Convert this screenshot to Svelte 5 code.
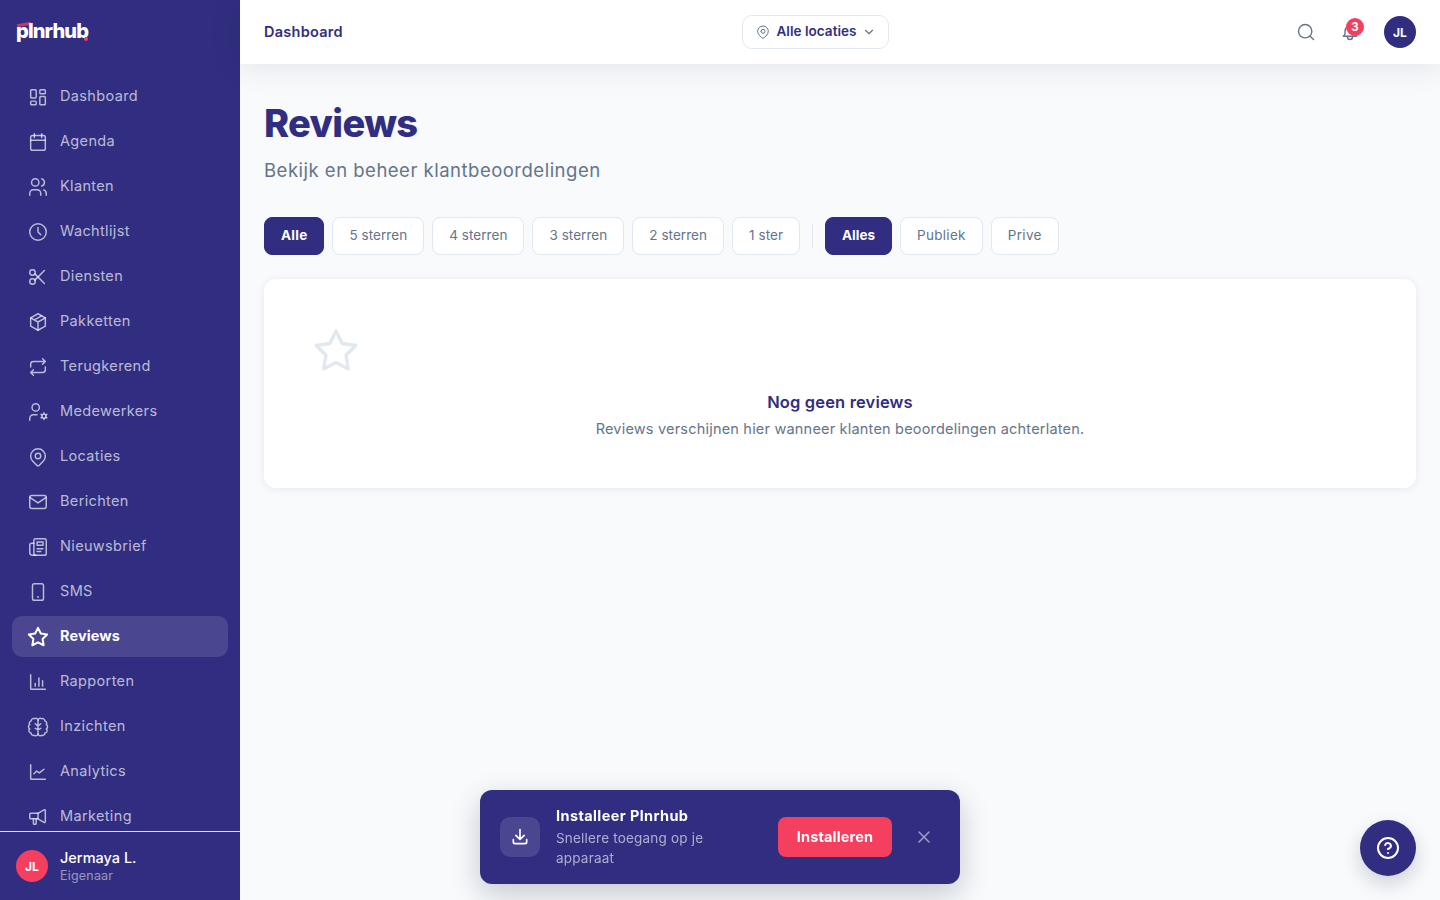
<script lang="ts">
  type NavItem = { label: string; icon: string };

  // stroke icons, 24x24 viewBox
  const icons: Record<string, string> = {
    dashboard: '<rect x="4" y="4" width="6" height="9" rx="1"/><rect x="4" y="16.500" width="6" height="4" rx="1"/><rect x="14" y="4" width="6" height="4.500" rx="1"/><rect x="14" y="11.500" width="6" height="9" rx="1"/>',
    calendar: '<rect x="4" y="5" width="16" height="16" rx="2"/><path d="M16 3v4M8 3v4M4 10h16"/>',
    users: '<path d="M5 7a4 4 0 1 0 8 0a4 4 0 1 0 -8 0"/><path d="M3 21v-2a4 4 0 0 1 4 -4h4a4 4 0 0 1 4 4v2"/><path d="M16 3.130a4 4 0 0 1 0 7.750"/><path d="M21 21v-2a4 4 0 0 0 -3 -3.850"/>',
    clock: '<circle cx="12" cy="12" r="9"/><path d="M12 7v5l3 3"/>',
    scissors: '<path d="M3 7a3 3 0 1 0 6 0a3 3 0 1 0 -6 0"/><path d="M3 17a3 3 0 1 0 6 0a3 3 0 1 0 -6 0"/><path d="M8.600 8.600l10.400 10.400"/><path d="M8.600 15.400l10.400 -10.400"/>',
    box: '<path d="M12 3l8 4.500v9l-8 4.500l-8 -4.500v-9l8 -4.500"/><path d="M12 12l8 -4.500M12 12v9M12 12l-8 -4.500M16 5.250l-8 4.500"/>',
    repeat: '<path d="M4 12v-3a3 3 0 0 1 3 -3h13m-3 -3l3 3l-3 3"/><path d="M20 12v3a3 3 0 0 1 -3 3h-13m3 3l-3 -3l3 -3"/>',
    usercog: '<circle cx="9.500" cy="7" r="4"/><path d="M3 21v-2a4 4 0 0 1 4 -4h4"/><circle cx="18.500" cy="16.500" r="2.200"/><path d="M18.500 12.800v1.200M18.500 19v1.200M15.300 14.600l1 .6M20.700 17.800l1 .6M15.300 18.400l1 -.6M20.700 15.200l1 -.6"/>',
    pin: '<path d="M9 11a3 3 0 1 0 6 0a3 3 0 0 0 -6 0"/><path d="M17.657 16.657l-4.243 4.243a2 2 0 0 1 -2.827 0l-4.244 -4.243a8 8 0 1 1 11.314 0z"/>',
    mail: '<rect x="3" y="5" width="18" height="14" rx="2"/><path d="M3 7l9 6l9 -6"/>',
    news: '<rect x="7.500" y="3" width="13.500" height="18" rx="2"/><path d="M7.500 8H5a2 2 0 0 0 -2 2v8a3 3 0 0 0 3 3h3.500"/><rect x="11" y="6.500" width="6.500" height="3.500"/><path d="M11 14h6.500M11 17h4"/>',
    phone: '<rect x="6" y="3" width="12" height="18" rx="2"/><path d="M11.500 17.500h1"/>',
    star: '<path d="M12 17.750l-6.172 3.245l1.179 -6.873l-5 -4.867l6.900 -1l3.086 -6.253l3.086 6.253l6.900 1l-5 4.867l1.179 6.873z"/>',
    report: '<path d="M4 4v15a1 1 0 0 0 1 1h15"/><path d="M9 16.500v-3M13 16.500v-9M17 16.500v-6"/>',
    brain: '<path d="M12 4.500A2.500 2.500 0 0 0 8 3A2.500 2.500 0 0 0 4.500 5.500A2.500 2.500 0 0 0 3 9.500A2.500 2.500 0 0 0 3 14A2.500 2.500 0 0 0 4.500 18.500A2.500 2.500 0 0 0 8 21A2.500 2.500 0 0 0 12 19.500A2.500 2.500 0 0 0 16 21A2.500 2.500 0 0 0 19.500 18.500A2.500 2.500 0 0 0 21 14A2.500 2.500 0 0 0 21 9.500A2.500 2.500 0 0 0 19.500 5.500A2.500 2.500 0 0 0 16 3A2.500 2.500 0 0 0 12 4.500z"/><path d="M12 4.500v15M12 11l-3 -2.500M12 11l3 -2.500M12 15l-3 -1.500M12 15l3 -1.500"/>',
    chart: '<path d="M4 4v15a1 1 0 0 0 1 1h15"/><path d="M7.500 14l3 -3l3 2l5 -4"/>',
    megaphone: '<path d="M10 14v5a1 1 0 0 1 -1 1h-1a1 1 0 0 1 -1 -1v-5"/><path d="M12 8l6.524 -3.770a.9 .9 0 0 1 1.476 .692v12.156a.9 .9 0 0 1 -1.476 .692l-6.524 -3.770h-8a1 1 0 0 1 -1 -1v-4a1 1 0 0 1 1 -1h8"/><path d="M12 8v6"/>'
  };

  const nav: NavItem[] = [
    { label: 'Dashboard', icon: 'dashboard' },
    { label: 'Agenda', icon: 'calendar' },
    { label: 'Klanten', icon: 'users' },
    { label: 'Wachtlijst', icon: 'clock' },
    { label: 'Diensten', icon: 'scissors' },
    { label: 'Pakketten', icon: 'box' },
    { label: 'Terugkerend', icon: 'repeat' },
    { label: 'Medewerkers', icon: 'usercog' },
    { label: 'Locaties', icon: 'pin' },
    { label: 'Berichten', icon: 'mail' },
    { label: 'Nieuwsbrief', icon: 'news' },
    { label: 'SMS', icon: 'phone' },
    { label: 'Reviews', icon: 'star' },
    { label: 'Rapporten', icon: 'report' },
    { label: 'Inzichten', icon: 'brain' },
    { label: 'Analytics', icon: 'chart' },
    { label: 'Marketing', icon: 'megaphone' }
  ];

  const ratings = ['Alle', '5 sterren', '4 sterren', '3 sterren', '2 sterren', '1 ster'];
  const scopes = ['Alles', 'Publiek', 'Prive'];

  let rating = $state('Alle');
  let scope = $state('Alles');
  let showInstall = $state(true);
</script>

<div class="layout">
  <aside class="sidebar">
    <div class="logo">
      <span class="logo-bar"></span>
      <span class="logo-text">plnrhub</span>
      <span class="logo-dot"></span>
    </div>
    <nav class="nav">
      {#each nav as item}
        <a class="nav-item" class:active={item.label === 'Reviews'} href="#{item.icon}">
          <svg class="nav-icon" viewBox="0 0 24 24" stroke-width={item.label === 'Reviews' ? 2.2 : 1.6}>{@html icons[item.icon]}</svg>
          <span class="nav-label">{item.label}</span>
        </a>
      {/each}
    </nav>
    <div class="user">
      <div class="avatar avatar--red">JL</div>
      <div class="user-info">
        <div class="user-name">Jermaya L.</div>
        <div class="user-role">Eigenaar</div>
      </div>
    </div>
  </aside>

  <div class="main">
    <header class="topbar">
      <div class="crumb">Dashboard</div>
      <button class="location">
        <svg class="loc-icon" viewBox="0 0 24 24" stroke-width="1.500">{@html icons.pin}</svg>
        <span class="loc-label">Alle locaties</span>
        <svg class="chev" viewBox="0 0 24 24" stroke-width="2"><path d="M6 9l6 6l6 -6"/></svg>
      </button>
      <div class="top-actions">
        <svg class="search" viewBox="0 0 24 24" stroke-width="1.700"><circle cx="11" cy="11" r="8"/><path d="M21 21l-4.300 -4.300"/></svg>
        <div class="bell">
          <svg viewBox="0 0 24 24" stroke-width="1.700"><path d="M10 5a2 2 0 1 1 4 0a7 7 0 0 1 4 6v3a4 4 0 0 0 2 3h-16a4 4 0 0 0 2 -3v-3a7 7 0 0 1 4 -6"/><path d="M9 17v1a3 3 0 0 0 6 0v-1"/></svg>
          <span class="badge">3</span>
        </div>
        <div class="avatar avatar--navy">JL</div>
      </div>
    </header>

    <main class="content">
      <h1>Reviews</h1>
      <p class="sub">Bekijk en beheer klantbeoordelingen</p>

      <div class="filters">
        {#each ratings as r}
          <button class="chip chip--rating" class:on={rating === r} onclick={() => (rating = r)}>{r}</button>
        {/each}
        <span class="divider"></span>
        {#each scopes as s}
          <button class="chip" class:on={scope === s} onclick={() => (scope = s)}>{s}</button>
        {/each}
      </div>

      <section class="card">
        <svg class="empty-star" viewBox="0 0 24 24">{@html icons.star}</svg>
        <h3>Nog geen reviews</h3>
        <p>Reviews verschijnen hier wanneer klanten beoordelingen achterlaten.</p>
      </section>
    </main>
  </div>
</div>

{#if showInstall}
  <div class="install">
    <div class="install-icon">
      <svg viewBox="0 0 24 24" stroke-width="2"><path d="M4 15v3a2 2 0 0 0 2 2h12a2 2 0 0 0 2 -2v-3"/><path d="M7 10l5 5l5 -5M12 3v12"/></svg>
    </div>
    <div class="install-text">
      <div class="install-title">Installeer Plnrhub</div>
      <div class="install-sub">Snellere toegang op je apparaat</div>
    </div>
    <button class="install-btn">Installeren</button>
    <button class="install-close" aria-label="Sluiten" onclick={() => (showInstall = false)}>
      <svg viewBox="0 0 24 24" stroke-width="1.700"><path d="M18 6L6 18M6 6l12 12"/></svg>
    </button>
  </div>
{/if}

<button class="help" aria-label="Help">
  <svg viewBox="0 0 24 24" stroke-width="2"><circle cx="12" cy="12" r="10"/><path d="M9.100 9a3 3 0 0 1 5.800 1c0 2 -3 3 -3 3"/><path d="M12 17h.01"/></svg>
</button>

<style>
:global(body) { margin: 0; background: #f8fafc; font-family: Inter, "Open Sans", sans-serif; color: #312e81; }
svg { fill: none; stroke: currentColor; stroke-linecap: round; stroke-linejoin: round; display: block; }
button { font-family: inherit; cursor: pointer; }

.layout { display: flex; height: 100vh; overflow: hidden; }

/* Sidebar */
.sidebar { width: 240px; flex-shrink: 0; background: #312e81; display: flex; flex-direction: column; height: 100vh; }
.logo { position: relative; height: 64px; flex-shrink: 0; }
.logo-text {
  position: absolute; left: 16px; top: 17px; font-size: 20px; font-weight: 800;
  color: #fff; letter-spacing: -.85px; line-height: 28px;
}
.logo-bar { position: absolute; left: 17px; top: 23px; width: 14px; height: 3px; background: #f43f5e; opacity: .75; transform: rotate(-10deg); }
.logo-dot { position: absolute; left: 84px; top: 37px; width: 4px; height: 4px; border-radius: 50%; background: #f43f5e; z-index: 1; }

.nav { flex: 1; min-height: 0; overflow: hidden; padding: 12px 12px 0; display: flex; flex-direction: column; gap: 4px; }
.nav-item {
  display: flex; align-items: center; gap: 11px; height: 41px; flex-shrink: 0;
  padding: 0 15px; border-radius: 10px; text-decoration: none;
  color: rgba(255,255,255,.68); font-size: 14.500px; letter-spacing: .35px;
}
.nav-item.active { background: rgba(255,255,255,.12); color: #fff; font-weight: 700; letter-spacing: .1px; }
.nav-icon { width: 22px; height: 22px; flex-shrink: 0; }
.nav-label { margin-bottom: 2px; }

.user { height: 69px; flex-shrink: 0; border-top: 1px solid rgba(255,255,255,.85); display: flex; align-items: center; gap: 12px; padding: 0 16px; box-sizing: border-box; }
.avatar { width: 32px; height: 32px; border-radius: 50%; display: flex; align-items: center; justify-content: center; color: #fff; font-size: 12px; font-weight: 700; flex-shrink: 0; }
.avatar--red { background: #f43f5e; }
.avatar--navy { background: #312e81; }
.user-name { font-size: 14.500px; font-weight: 500; color: #fff; letter-spacing: 0; line-height: 18px; }
.user-role { font-size: 12.500px; color: rgba(255,255,255,.5); letter-spacing: .2px; line-height: 17px; }

/* Topbar */
.main { flex: 1; min-width: 0; display: flex; flex-direction: column; }
.topbar {
  height: 64px; flex-shrink: 0; background: #fff; display: flex; align-items: center;
  justify-content: space-between; padding: 0 24px; box-shadow: 0 2px 32px rgba(15,23,42,.1);
  position: relative;
}
.crumb { font-size: 14.500px; font-weight: 600; letter-spacing: .25px; margin-bottom: 2px; }
.location {
  position: absolute; left: 502px; top: 15px; height: 34px; width: 147px; box-sizing: border-box;
  display: flex; align-items: center; justify-content: center; gap: 5px; padding: 0;
  background: #fff; border: 1px solid #e2e8f0; border-radius: 10px;
  color: #312e81; font-size: 13.500px; font-weight: 600; letter-spacing: .05px;
}
.loc-icon { width: 16px; height: 16px; color: #64748b; }
.loc-label { margin-bottom: 2px; }
.chev { width: 14px; height: 14px; color: #64748b; }
.top-actions { display: flex; align-items: center; gap: 24px; color: #64748b; }
.search { width: 20px; height: 20px; }
.bell { position: relative; width: 20px; height: 20px; }
.bell svg { width: 20px; height: 20px; }
.badge {
  position: absolute; top: -4px; right: -4px; width: 18px; height: 18px; border-radius: 50%;
  background: #f43f5e; color: #fff; font-size: 11.500px; font-weight: 700;
  display: flex; align-items: center; justify-content: center;
}

/* Content */
.content { padding: 36px 24px 24px; }
h1 { margin: 0; font-size: 38px; font-weight: 800; line-height: 46px; letter-spacing: -.65px; color: #312e81; }
.sub { margin: 10px 0 0; font-size: 18.500px; line-height: 28px; color: #64748b; letter-spacing: .5px; }
.filters { display: flex; align-items: center; gap: 8px; margin-top: 33px; }
.chip {
  height: 38px; box-sizing: border-box; padding: 0 16px 2px; background: #fff;
  border: 1px solid #e2e8f0; border-radius: 8px; color: #64748b;
  font-size: 13.500px; letter-spacing: .3px; white-space: nowrap;
}
.chip--rating { letter-spacing: .05px; }
.chip.on { background: #312e81; border-color: #312e81; color: #fff; font-weight: 700; letter-spacing: 0; }
.chip--rating.on { letter-spacing: .25px; }
.divider { width: 1px; height: 24px; background: #e2e8f0; margin: 0 4px; }
.card {
  margin-top: 24px; background: #fff; border-radius: 12px; padding: 48px;
  height: 209px; box-sizing: border-box; box-shadow: 0 1px 8px rgba(15,23,42,.08);
}
.empty-star { width: 48px; height: 48px; color: #e2e8f0; margin-bottom: 14px; stroke-width: 1.700; }
.card h3 { margin: 0; font-size: 16.500px; font-weight: 600; line-height: 26px; text-align: center; letter-spacing: .15px; }
.card p { margin: 3px 0 0; font-size: 14.500px; line-height: 22px; color: #64748b; text-align: center; letter-spacing: .2px; }

/* Install prompt */
.install {
  position: fixed; left: 480px; bottom: 16px; width: 480px; height: 94px; box-sizing: border-box;
  background: #312e81; border-radius: 12px; display: flex; align-items: center;
  padding: 0 20px; box-shadow: 0 10px 30px rgba(15,23,42,.22);
}
.install-icon { width: 40px; height: 40px; border-radius: 10px; background: rgba(255,255,255,.12); color: #fff; display: flex; align-items: center; justify-content: center; flex-shrink: 0; }
.install-icon svg { width: 20px; height: 20px; }
.install-text { margin-left: 16px; width: 180px; margin-right: 42px; flex-shrink: 0; }
.install-title { font-size: 14.500px; font-weight: 700; color: #fff; line-height: 20px; letter-spacing: .4px; }
.install-sub { font-size: 13.500px; line-height: 20px; color: rgba(255,255,255,.6); margin-top: 2px; letter-spacing: .2px; }
.install-btn { width: 114px; height: 40px; background: #f43f5e; color: #fff; border: none; border-radius: 8px; font-size: 14.500px; font-weight: 700; flex-shrink: 0; padding: 0 0 2px; letter-spacing: .15px; }
.install-close { margin-left: 22px; width: 20px; height: 20px; padding: 0; background: none; border: none; color: rgba(255,255,255,.55); flex-shrink: 0; }
.install-close svg { width: 20px; height: 20px; }

.help {
  position: fixed; right: 24px; bottom: 24px; width: 56px; height: 56px; border-radius: 50%;
  background: #312e81; color: #fff; border: none; display: flex; align-items: center; justify-content: center;
  box-shadow: 0 8px 20px rgba(15,23,42,.18); padding: 0;
}
.help svg { width: 24px; height: 24px; }
</style>
